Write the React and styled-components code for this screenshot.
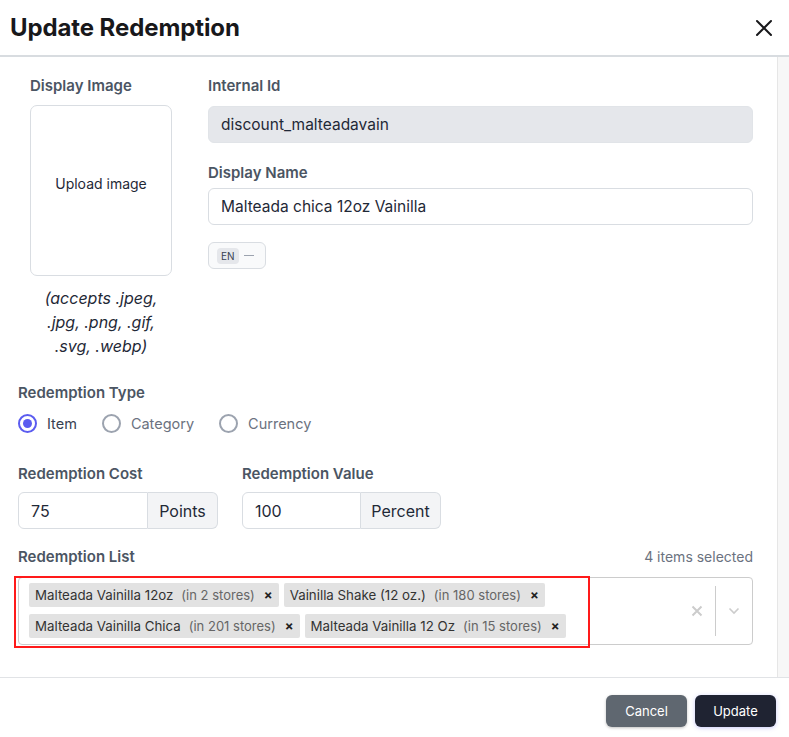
import React from 'react';
import styled, { createGlobalStyle, css } from 'styled-components';

const GlobalStyle = createGlobalStyle`
  html, body {
    margin: 0;
    padding: 0;
    background: #ffffff;
  }
  body {
    font-family: Inter, "Noto Sans", "Liberation Sans", sans-serif;
    color: #111827;
  }
  * { box-sizing: border-box; }
`;

const Modal = styled.div`
  width: 789px;
  height: 737px;
  display: flex;
  flex-direction: column;
  background: #fff;
  overflow: hidden;
`;

const Header = styled.div`
  height: 57px;
  flex: none;
  display: flex;
  align-items: center;
  justify-content: space-between;
  padding: 0 16px 0 10px;
  border-bottom: 2px solid #d8dce0;
`;

const Title = styled.h2`
  margin: 0;
  font-size: 24px;
  font-weight: 700;
  letter-spacing: -0.1px;
  color: #18181b;
`;

const CloseButton = styled.button`
  border: 0;
  background: none;
  padding: 0;
  width: 18px;
  height: 18px;
  display: flex;
  color: #18181b;
`;

const Body = styled.div`
  flex: 1;
  display: flex;
  min-height: 0;
  border-bottom: 1px solid #e1e3e6;
`;

const Content = styled.div`
  flex: 1;
  padding: 20px 24px 0 18px;
`;

const ScrollTrack = styled.div`
  width: 12px;
  flex: none;
  background: #f7f7f7;
  border-left: 1px solid #e6e6e6;
`;

const TopRow = styled.div`
  display: flex;
  gap: 24px;
`;

const ImageColumn = styled.div`
  width: 166px;
  flex: none;
  padding-left: 12px;
`;

const FieldsColumn = styled.div`
  flex: 1;
  display: flex;
  flex-direction: column;
`;

const Label = styled.div`
  font-size: 15px;
  line-height: 18px;
  font-weight: 600;
  color: #4b5563;
  margin-bottom: ${p => p.$gap || 10}px;
  margin-top: ${p => p.$top || 0}px;
`;

const UploadBox = styled.div`
  width: 142px;
  height: 171px;
  border: 1px solid #d9dde2;
  border-radius: 7px;
  display: flex;
  align-items: center;
  justify-content: center;
  padding-bottom: 15px;
  font-size: 14px;
  color: #1f2937;
`;

const Caption = styled.p`
  width: 142px;
  margin: 10px 0 0;
  text-align: center;
  font-size: 16px;
  line-height: 24px;
  font-style: italic;
  color: #1f2937;
`;

const TextInput = styled.div`
  height: ${p => p.$h || 37}px;
  display: flex;
  align-items: center;
  padding: 0 12px;
  font-size: 15.5px;
  color: #1f2937;
  border: 1px solid #d9dde2;
  border-radius: 6px;
  background: #fff;
  ${p => p.$disabled && css`
    background: #e5e7eb;
    border-color: #e1e4e8;
  `}
`;

const LangToggle = styled.div`
  margin-top: 17px;
  align-self: flex-start;
  width: 58px;
  height: 27px;
  border: 1px solid #d9dde2;
  border-radius: 6px;
  background: #f9fafb;
  display: flex;
  align-items: center;
  gap: 5px;
  padding-left: 8px;
`;

const LangTag = styled.span`
  background: #e5e7eb;
  border-radius: 4px;
  font-size: 10px;
  padding: 2px 4px;
  color: #374151;
  line-height: 12px;
`;

const Dash = styled.span`
  width: 10px;
  height: 1px;
  background: #9ca3af;
`;

const Section = styled.div`
  margin-top: ${p => p.$top || 0}px;
`;

const RadioRow = styled.div`
  display: flex;
  gap: 25px;
  align-items: center;
`;

const RadioOption = styled.label`
  display: flex;
  align-items: center;
  gap: 10px;
  font-size: 14.5px;
  color: ${p => (p.$checked ? '#374151' : '#6b7280')};
`;

const RadioCircle = styled.span`
  width: 19px;
  height: 19px;
  border-radius: 50%;
  border: 2px solid ${p => (p.$checked ? '#5b5cf0' : '#9ca3af')};
  display: flex;
  align-items: center;
  justify-content: center;
  &::after {
    content: '';
    width: 9px;
    height: 9px;
    border-radius: 50%;
    background: ${p => (p.$checked ? '#5b5cf0' : 'transparent')};
  }
`;

const CostRow = styled.div`
  display: flex;
  gap: 24px;
`;

const InputGroup = styled.div`
  display: flex;
  height: 37px;
`;

const GroupInput = styled.div`
  width: ${p => p.$w}px;
  border: 1px solid #d9dde2;
  border-radius: 6px 0 0 6px;
  display: flex;
  align-items: center;
  padding: 0 12px;
  font-size: 16px;
  color: #1f2937;
`;

const Addon = styled.div`
  width: ${p => p.$w}px;
  border: 1px solid #d9dde2;
  border-left: 0;
  border-radius: 0 6px 6px 0;
  background: #f3f4f6;
  display: flex;
  align-items: center;
  justify-content: center;
  font-size: 16px;
  color: #1f2937;
`;

const ListHeader = styled.div`
  display: flex;
  justify-content: space-between;
  align-items: flex-start;
`;

const SelectedCount = styled.span`
  font-size: 14px;
  line-height: 18px;
  color: #6b7280;
`;

const SelectBox = styled.div`
  position: relative;
  height: 68px;
  border: 1px solid #cccccc;
  border-radius: 4px;
  display: flex;
  align-items: center;
`;

const ChipArea = styled.div`
  flex: 1;
  display: flex;
  flex-wrap: wrap;
  gap: 7px 5px;
  padding: 0 0 2px 10px;
  width: 560px;
  max-width: 560px;
`;

const Chip = styled.span`
  display: inline-flex;
  align-items: center;
  height: 24px;
  background: #e2e2e2;
  border-radius: 2px;
  padding: 0 6px 0 6px;
  font-size: 13.3px;
  color: #333;
  white-space: nowrap;
`;

const ChipNote = styled.span`
  font-size: 13px;
  color: #666;
  margin-left: 8px;
`;

const ChipRemove = styled.span`
  margin-left: 9px;
  font-size: 13px;
  font-weight: 700;
  color: #222;
`;

const Indicators = styled.div`
  margin-left: auto;
  display: flex;
  align-items: center;
  height: 100%;
`;

const IndicatorBtn = styled.span`
  width: 36px;
  display: flex;
  align-items: center;
  justify-content: center;
  color: #cccccc;
`;

const Separator = styled.span`
  width: 1px;
  height: 50px;
  background: #cccccc;
`;

const Highlight = styled.div`
  position: absolute;
  left: -5px;
  top: -2px;
  width: 576px;
  height: 72px;
  border: 2px solid #ff1a1a;
  pointer-events: none;
`;

const Footer = styled.div`
  height: 59px;
  flex: none;
  display: flex;
  justify-content: flex-end;
  align-items: center;
  gap: 8px;
  padding: 6px 13px 0 0;
`;

const Button = styled.button`
  width: 81px;
  height: 32px;
  border: 0;
  border-radius: 6px;
  font-family: inherit;
  font-size: 13px;
  color: #fff;
  background: ${p => (p.$primary ? '#1f2332' : '#5f6770')};
  box-shadow: ${p => (p.$primary
    ? '0 1px 4px rgba(99, 102, 241, 0.35)'
    : '0 1px 3px rgba(0, 0, 0, 0.25)')};
`;

const chips = [
  { name: 'Malteada Vainilla 12oz', stores: 2 },
  { name: 'Vainilla Shake (12 oz.)', stores: 180 },
  { name: 'Malteada Vainilla Chica', stores: 201 },
  { name: 'Malteada Vainilla 12 Oz', stores: 15 },
];

const radios = [
  { label: 'Item', checked: true },
  { label: 'Category' },
  { label: 'Currency' },
];

export default function App() {
  return (
    <>
      <GlobalStyle />
      <Modal>
        <Header>
          <Title>Update Redemption</Title>
          <CloseButton aria-label="Close">
            <svg width="18" height="18" viewBox="0 0 18 18" fill="none" stroke="currentColor" strokeWidth="2" strokeLinecap="round">
              <path d="M2 2l14 14M16 2L2 16" />
            </svg>
          </CloseButton>
        </Header>

        <Body>
          <Content>
            <TopRow>
              <ImageColumn>
                <Label $gap={10}>Display Image</Label>
                <UploadBox>Upload image</UploadBox>
                <Caption>(accepts .jpeg, .jpg, .png, .gif, .svg, .webp)</Caption>
              </ImageColumn>

              <FieldsColumn>
                <Label $gap={11}>Internal Id</Label>
                <TextInput $disabled>discount_malteadavain</TextInput>
                <Label $top={21} $gap={6}>Display Name</Label>
                <TextInput>Malteada chica 12oz Vainilla</TextInput>
                <LangToggle>
                  <LangTag>EN</LangTag>
                  <Dash />
                </LangToggle>
              </FieldsColumn>
            </TopRow>

            <Section $top={26}>
              <Label $gap={12}>Redemption Type</Label>
              <RadioRow>
                {radios.map(r => (
                  <RadioOption key={r.label} $checked={r.checked}>
                    <RadioCircle $checked={r.checked} />
                    {r.label}
                  </RadioOption>
                ))}
              </RadioRow>
            </Section>

            <Section $top={32}>
              <CostRow>
                <div>
                  <Label $gap={9}>Redemption Cost</Label>
                  <InputGroup>
                    <GroupInput $w={130}>75</GroupInput>
                    <Addon $w={70}>Points</Addon>
                  </InputGroup>
                </div>
                <div>
                  <Label $gap={9}>Redemption Value</Label>
                  <InputGroup>
                    <GroupInput $w={119}>100</GroupInput>
                    <Addon $w={80}>Percent</Addon>
                  </InputGroup>
                </div>
              </CostRow>
            </Section>

            <Section $top={19}>
              <ListHeader>
                <Label $gap={11}>Redemption List</Label>
                <SelectedCount>4 items selected</SelectedCount>
              </ListHeader>
              <SelectBox>
                <ChipArea>
                  {chips.map(c => (
                    <Chip key={c.name}>
                      {c.name}
                      <ChipNote>(in {c.stores} stores)</ChipNote>
                      <ChipRemove>×</ChipRemove>
                    </Chip>
                  ))}
                </ChipArea>
                <Indicators>
                  <IndicatorBtn>
                    <svg width="12" height="12" viewBox="0 0 12 12" stroke="currentColor" strokeWidth="2">
                      <path d="M1.5 1.5l9 9M10.5 1.5l-9 9" />
                    </svg>
                  </IndicatorBtn>
                  <Separator />
                  <IndicatorBtn>
                    <svg width="12" height="8" viewBox="0 0 12 8" fill="none" stroke="currentColor" strokeWidth="1.6">
                      <path d="M1.5 1.5L6 6l4.5-4.5" />
                    </svg>
                  </IndicatorBtn>
                </Indicators>
                <Highlight />
              </SelectBox>
            </Section>
          </Content>
          <ScrollTrack />
        </Body>

        <Footer>
          <Button>Cancel</Button>
          <Button $primary>Update</Button>
        </Footer>
      </Modal>
    </>
  );
}
